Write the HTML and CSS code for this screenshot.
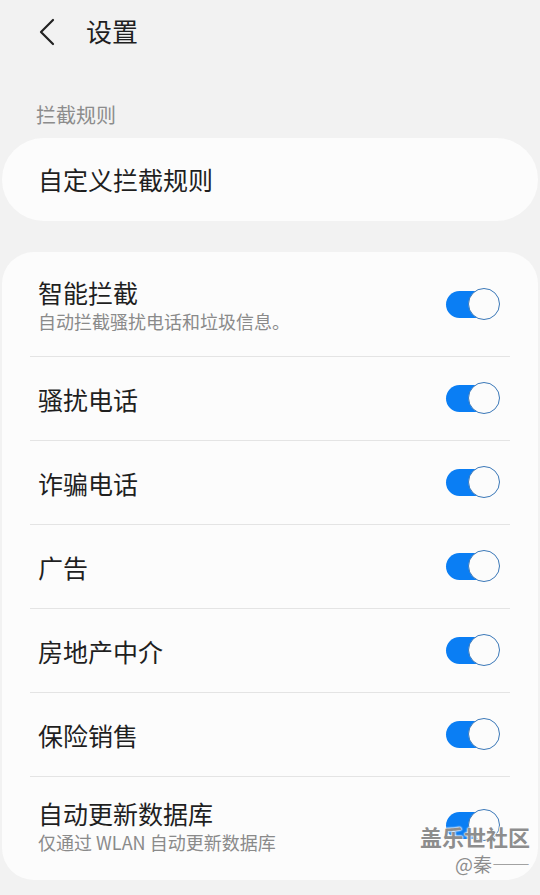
FILE: index.html
```html
<!DOCTYPE html>
<html lang="zh-CN">
<head>
  <meta charset="UTF-8">
  <meta name="viewport" content="width=device-width, initial-scale=1.0">
  <title>设置</title>
  <link rel="stylesheet" href="styles.css">
</head>
<body>
  <header class="topbar">
    <span class="back">
      <svg width="18" height="28" viewBox="0 0 18 28"><polyline points="15,2 3,14 15,26" fill="none" stroke="#222" stroke-width="2.2" stroke-linecap="round" stroke-linejoin="round"/></svg>
    </span>
    <h1>设置</h1>
  </header>

  <div class="label">拦截规则</div>

  <section class="card single">
    <div class="row-title">自定义拦截规则</div>
  </section>

  <section class="card list">
    <div class="row tall">
      <div class="texts">
        <div class="row-title">智能拦截</div>
        <div class="row-sub">自动拦截骚扰电话和垃圾信息。</div>
      </div>
      <span class="switch"></span>
    </div>
    <div class="row">
      <div class="row-title">骚扰电话</div>
      <span class="switch"></span>
    </div>
    <div class="row">
      <div class="row-title">诈骗电话</div>
      <span class="switch"></span>
    </div>
    <div class="row">
      <div class="row-title">广告</div>
      <span class="switch"></span>
    </div>
    <div class="row">
      <div class="row-title">房地产中介</div>
      <span class="switch"></span>
    </div>
    <div class="row">
      <div class="row-title">保险销售</div>
      <span class="switch"></span>
    </div>
    <div class="row tall last">
      <div class="texts">
        <div class="row-title">自动更新数据库</div>
        <div class="row-sub">仅通过 WLAN 自动更新数据库</div>
      </div>
      <span class="switch"></span>
    </div>
  </section>

  <div class="watermark">
    <div class="wm-big">盖乐世社区</div>
    <div class="wm-small">@秦——</div>
  </div>
</body>
</html>
```

FILE: styles.css
```css
body {
  margin: 0;
  padding: 0;
  background-color: #f2f2f2;
  font-family: "Noto Sans CJK SC", "Noto Sans", sans-serif;
  color: #1f1f1f;
  width: 540px;
  height: 895px;
  overflow: hidden;
  position: relative;
}

.topbar {
  display: flex;
  align-items: center;
  height: 62px;
  padding-left: 38px;
}

.back {
  display: flex;
  width: 18px;
  height: 28px;
  margin-top: 1px;
}

.topbar h1 {
  margin: 0 0 0 30px;
  font-size: 26px;
  font-weight: 400;
  line-height: 1;
}

.label {
  margin: 40px 0 0 36px;
  font-size: 20px;
  line-height: 26px;
  color: #8c8c8c;
}

.card {
  background-color: #fcfcfc;
  margin: 0 2px;
}

.single {
  margin-top: 10px;
  height: 83px;
  border-radius: 42px;
  display: flex;
  align-items: center;
  padding-left: 36px;
  padding-bottom: 2px;
  box-sizing: border-box;
}

.list {
  margin-top: 31px;
  border-radius: 32px;
  padding: 0 28px;
  height: 628px;
}

.row {
  display: flex;
  align-items: center;
  justify-content: space-between;
  height: 84px;
  box-sizing: border-box;
  border-bottom: 1px solid #e4e4e4;
  padding: 0 10px 0 8px;
}

.row.tall {
  height: 105px;
}

.row.last {
  border-bottom: none;
  height: 96px;
}

.row-title {
  font-size: 25px;
  line-height: 30px;
  color: #1f1f1f;
}

.row-sub {
  font-size: 18px;
  line-height: 22px;
  color: #8a8a8a;
  margin-top: 3px;
}

.switch {
  position: relative;
  width: 54px;
  height: 33px;
  flex-shrink: 0;
}

.switch::before {
  content: "";
  position: absolute;
  left: 0;
  top: 3px;
  width: 44px;
  height: 27px;
  border-radius: 14px;
  background-color: #0a7ef4;
}

.switch::after {
  content: "";
  position: absolute;
  right: 0;
  top: 0;
  width: 30px;
  height: 30px;
  border-radius: 50%;
  background-color: #fcfcfc;
  border: 1.5px solid #3b78b8;
}

.watermark {
  position: absolute;
  right: 10px;
  top: 822px;
  text-align: right;
  color: #8d8d8d;
  text-shadow: 0 0 2px #fff, 0 0 2px #fff, 0 0 2px #fff;
}

.wm-big {
  font-size: 22px;
  line-height: 28px;
  font-weight: 700;
}

.wm-small {
  font-size: 19px;
  line-height: 24px;
  margin-top: 2px;
}
```
